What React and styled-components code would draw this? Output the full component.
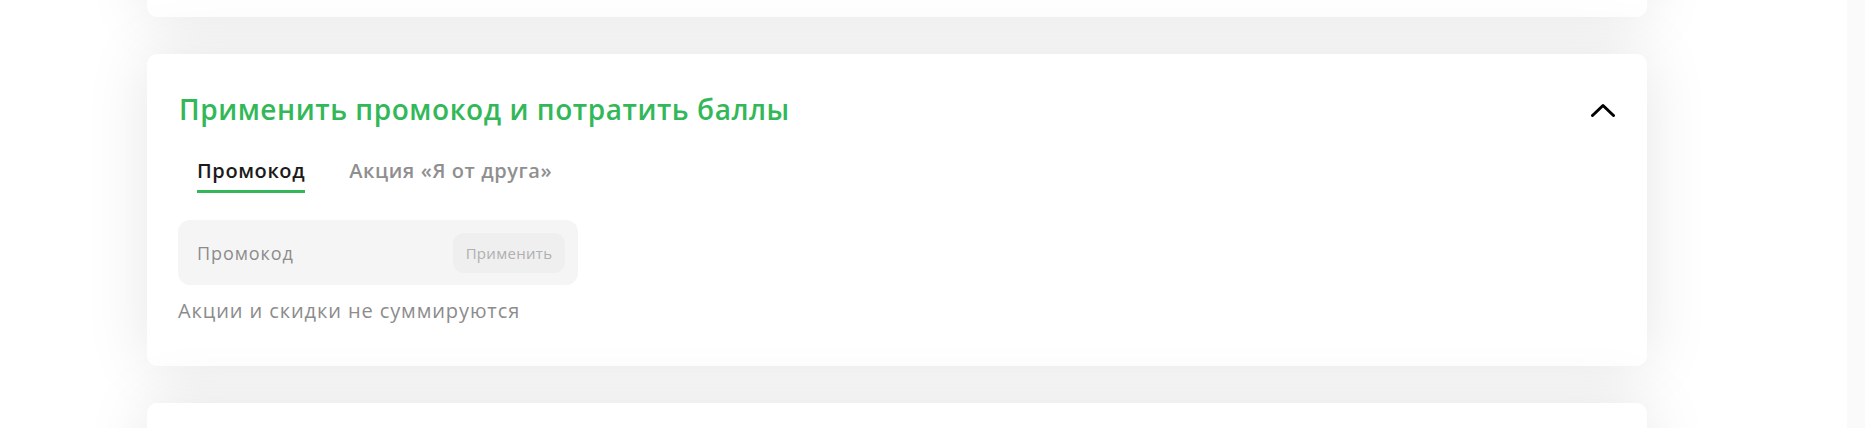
import React, { useState } from 'react';
import styled, { createGlobalStyle } from 'styled-components';

const Global = createGlobalStyle`
  html, body {
    margin: 0;
    padding: 0;
    background: #fff;
    font-family: "Open Sans", "Liberation Sans", sans-serif;
    overflow: hidden;
  }
`;

const Page = styled.div`
  display: flex;
  align-items: flex-start;
  width: 1865px;
  height: 428px;
  overflow: hidden;
`;

const Content = styled.div`
  flex: 1;
  display: flex;
  flex-direction: column;
  gap: 37px;
  padding-left: 147px;
  margin-top: -200px;
`;

const ScrollTrack = styled.div`
  align-self: stretch;
  width: 18px;
  background: #fafafa;
`;

const Card = styled.section`
  flex-shrink: 0;
  width: 1500px;
  box-sizing: border-box;
  background: #fff;
  border-radius: 10px;
  box-shadow: 0 0 64px rgba(0, 0, 0, 0.1);
  height: ${p => p.h || 'auto'};
  padding: ${p => p.pad || '0'};
`;

const Header = styled.div`
  display: flex;
  align-items: center;
  justify-content: space-between;
  height: 36px;
`;

const Title = styled.h2`
  margin: 0;
  font-size: 28px;
  line-height: 36px;
  font-weight: 600;
  color: #33b859;
  letter-spacing: 0.55px;
`;

const Toggle = styled.button`
  border: 0;
  background: none;
  padding: 0;
  margin-top: 1px;
  width: 24px;
  height: 14px;
  display: flex;
  cursor: pointer;
`;

const Tabs = styled.div`
  display: flex;
  gap: 44px;
  padding-left: 18px;
  margin-top: 31px;
`;

const Tab = styled.div`
  font-size: 20px;
  line-height: 26px;
  font-weight: 600;
  letter-spacing: 0.6px;
  color: ${p => (p.active ? '#1b1b1b' : '#8f8f8f')};
  padding-bottom: 6px;
  border-bottom: 3px solid ${p => (p.active ? '#33b859' : 'transparent')};
  cursor: pointer;
`;

const Field = styled.div`
  display: flex;
  align-items: center;
  justify-content: space-between;
  width: 400px;
  height: 65px;
  box-sizing: border-box;
  margin-top: 27px;
  margin-left: -1px;
  padding: 1px 13px 0 19px;
  background: #f5f5f5;
  border-radius: 12px;
`;

const Input = styled.input`
  border: 0;
  padding: 0;
  background: transparent;
  outline: none;
  font-family: inherit;
  font-size: 18px;
  letter-spacing: 0.9px;
  color: #1b1b1b;
  width: 200px;
  &::placeholder {
    color: #8c8c8c;
  }
`;

const ApplyButton = styled.button`
  width: 112px;
  height: 40px;
  border: 0;
  border-radius: 11px;
  background: #efefef;
  color: #b0b0b0;
  font-family: inherit;
  font-size: 15px;
  font-weight: 500;
  letter-spacing: 0.3px;
`;

const Note = styled.p`
  margin: 14px 0 0 -1px;
  font-size: 20px;
  line-height: 24px;
  letter-spacing: 0.9px;
  color: #8c8c8c;
`;

export default function App() {
  const [tab, setTab] = useState(0);
  const tabs = ['Промокод', 'Акция «Я от друга»'];
  return (
    <Page>
      <Global />
      <Content>
        <Card h="217px" />
        <Card h="312px" pad="37px 32px 0 32px">
          <Header>
            <Title>Применить промокод и потратить баллы</Title>
            <Toggle aria-label="Свернуть">
              <svg width="24" height="14" viewBox="0 0 24 14">
                <path d="M1.5 12.5 L12 2.5 L22.5 12.5" fill="none" stroke="#000" strokeWidth="3" strokeLinecap="round" strokeLinejoin="round" />
              </svg>
            </Toggle>
          </Header>
          <Tabs>
            {tabs.map((t, i) => (
              <Tab key={t} active={tab === i} onClick={() => setTab(i)}>{t}</Tab>
            ))}
          </Tabs>
          <Field>
            <Input placeholder="Промокод" />
            <ApplyButton>Применить</ApplyButton>
          </Field>
          <Note>Акции и скидки не суммируются</Note>
        </Card>
        <Card h="200px" />
      </Content>
      <ScrollTrack />
    </Page>
  );
}
